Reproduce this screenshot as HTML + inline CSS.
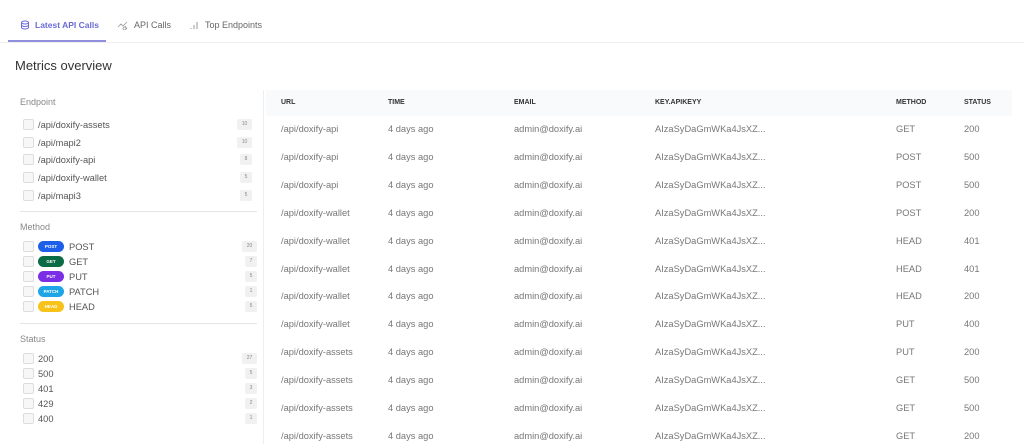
<!DOCTYPE html>
<html><head><style>
*{box-sizing:border-box;margin:0;padding:0}
body{width:1024px;height:444px;overflow:hidden;background:#fff;font-family:"Liberation Sans",sans-serif;color:#555;position:relative}
.a{position:absolute;white-space:nowrap}
.tab{font-size:9px;top:20px;color:#666}
.cb{position:absolute;left:23px;width:11px;height:11px;border:1px solid #ddd;border-radius:2px;background:#f7f7f7}
.lbl{font-size:9.3px;color:#555}
.cnt{position:absolute;font-size:5px;color:#888;background:#f1f1f1;border-radius:2px;text-align:center;height:11px;line-height:11px}
.pill{position:absolute;left:38px;width:26px;height:11px;border-radius:6px;color:#fff;font-size:4.5px;font-weight:bold;text-align:center;line-height:11px}
.th{font-size:7px;font-weight:bold;color:#333;top:99px}
.td{font-size:9.3px;color:#777}
</style></head><body>
<div class="a" style="left:0;top:42px;width:1024px;height:1px;background:#eee"></div>
<div class="a" style="left:8px;top:40px;width:98px;height:2px;background:#8f8fdc"></div>
<svg class="a" style="left:20px;top:20px" width="10" height="10" viewBox="0 0 10 10" fill="none" stroke="#6b6bd6" stroke-width="1"><ellipse cx="5" cy="2.5" rx="3.5" ry="1.5"/><path d="M1.5 2.5v5c0 .8 1.6 1.5 3.5 1.5s3.5-.7 3.5-1.5v-5M1.5 5c0 .8 1.6 1.5 3.5 1.5S8.5 5.8 8.5 5"/></svg>
<div class="a tab" style="left:35px;color:#6b6bd6;font-weight:bold;font-size:8.5px">Latest API Calls</div>
<svg class="a" style="left:117px;top:20px" width="12" height="10" viewBox="0 0 12 10" fill="none" stroke="#999" stroke-width=".8"><path d="M1 7l3-3 2 2 4-4M8 6l2 3M7.5 7a1.5 1.5 0 1 0 .01 0"/></svg>
<div class="a tab" style="left:134px">API Calls</div>
<svg class="a" style="left:189px;top:20px" width="10" height="10" viewBox="0 0 10 10" stroke="#999" stroke-width="1"><path d="M2 9v-1M5 9v-4M8 9v-7"/></svg>
<div class="a tab" style="left:205px">Top Endpoints</div>
<div class="a" style="left:15px;top:58px;font-size:13px;color:#333">Metrics overview</div>

<div class="a" style="left:263px;top:90px;width:1px;height:354px;background:#eee"></div>
<div class="a" style="left:20px;top:97px;font-size:9px;color:#888">Endpoint</div>
<div class="a" style="left:20px;top:211px;width:237px;height:1px;background:#e5e5e5"></div>
<div class="a" style="left:20px;top:222px;font-size:9px;color:#888">Method</div>
<div class="a" style="left:20px;top:323px;width:237px;height:1px;background:#e5e5e5"></div>
<div class="a" style="left:20px;top:334px;font-size:9px;color:#888">Status</div>

<div class="cb" style="top:119px"></div><div class="a lbl" style="left:38px;top:120px">/api/doxify-assets</div><div class="cnt" style="left:237px;top:119px;width:15px">10</div>
<div class="cb" style="top:137px"></div><div class="a lbl" style="left:38px;top:138px">/api/mapi2</div><div class="cnt" style="left:237px;top:137px;width:15px">10</div>
<div class="cb" style="top:154px"></div><div class="a lbl" style="left:38px;top:155px">/api/doxify-api</div><div class="cnt" style="left:240px;top:154px;width:12px">8</div>
<div class="cb" style="top:172px"></div><div class="a lbl" style="left:38px;top:173px">/api/doxify-wallet</div><div class="cnt" style="left:240px;top:172px;width:12px">5</div>
<div class="cb" style="top:190px"></div><div class="a lbl" style="left:38px;top:191px">/api/mapi3</div><div class="cnt" style="left:240px;top:190px;width:12px">5</div>

<div class="cb" style="top:241px"></div><div class="pill" style="top:241px;background:#1d5fe8">POST</div><div class="a lbl" style="left:69px;top:242px">POST</div><div class="cnt" style="left:242px;top:241px;width:15px">20</div>
<div class="cb" style="top:256px"></div><div class="pill" style="top:256px;background:#0b6b45">GET</div><div class="a lbl" style="left:69px;top:257px">GET</div><div class="cnt" style="left:245px;top:256px;width:12px">7</div>
<div class="cb" style="top:271px"></div><div class="pill" style="top:271px;background:#7a2ee6">PUT</div><div class="a lbl" style="left:69px;top:272px">PUT</div><div class="cnt" style="left:245px;top:271px;width:12px">5</div>
<div class="cb" style="top:286px"></div><div class="pill" style="top:286px;background:#1ea5e6">PATCH</div><div class="a lbl" style="left:69px;top:287px">PATCH</div><div class="cnt" style="left:245px;top:286px;width:12px">1</div>
<div class="cb" style="top:301px"></div><div class="pill" style="top:301px;background:#f7c21a">HEAD</div><div class="a lbl" style="left:69px;top:302px">HEAD</div><div class="cnt" style="left:245px;top:301px;width:12px">5</div>

<div class="cb" style="top:353px"></div><div class="a lbl" style="left:38px;top:354px">200</div><div class="cnt" style="left:242px;top:353px;width:15px">27</div>
<div class="cb" style="top:368px"></div><div class="a lbl" style="left:38px;top:369px">500</div><div class="cnt" style="left:245px;top:368px;width:12px">5</div>
<div class="cb" style="top:383px"></div><div class="a lbl" style="left:38px;top:384px">401</div><div class="cnt" style="left:245px;top:383px;width:12px">3</div>
<div class="cb" style="top:398px"></div><div class="a lbl" style="left:38px;top:399px">429</div><div class="cnt" style="left:245px;top:398px;width:12px">2</div>
<div class="cb" style="top:413px"></div><div class="a lbl" style="left:38px;top:414px">400</div><div class="cnt" style="left:245px;top:413px;width:12px">1</div>

<div class="a" style="left:266px;top:90px;width:746px;height:26px;background:#f9fafb"></div>
<div class="a th" style="left:281px">URL</div>
<div class="a th" style="left:388px">TIME</div>
<div class="a th" style="left:514px">EMAIL</div>
<div class="a th" style="left:655px">KEY.APIKEYY</div>
<div class="a th" style="left:896px">METHOD</div>
<div class="a th" style="left:964px">STATUS</div>

<div id="rows"></div>
<script>
var d=[["api","GET",200],["api","POST",500],["api","POST",500],["wallet","POST",200],["wallet","HEAD",401],["wallet","HEAD",401],["wallet","HEAD",200],["wallet","PUT",400],["assets","PUT",200],["assets","GET",500],["assets","GET",500],["assets","GET",200]];
var h="";d.forEach(function(r,i){var t=124+i*27.9;
h+='<div class="a td" style="left:281px;top:'+t+'px">/api/doxify-'+r[0]+'</div><div class="a td" style="left:388px;top:'+t+'px">4 days ago</div><div class="a td" style="left:514px;top:'+t+'px">admin@doxify.ai</div><div class="a td" style="left:655px;top:'+t+'px">AIzaSyDaGmWKa4JsXZ...</div><div class="a td" style="left:896px;top:'+t+'px">'+r[1]+'</div><div class="a td" style="left:964px;top:'+t+'px">'+r[2]+'</div>';});
document.getElementById("rows").innerHTML=h;
</script>
</body></html>
